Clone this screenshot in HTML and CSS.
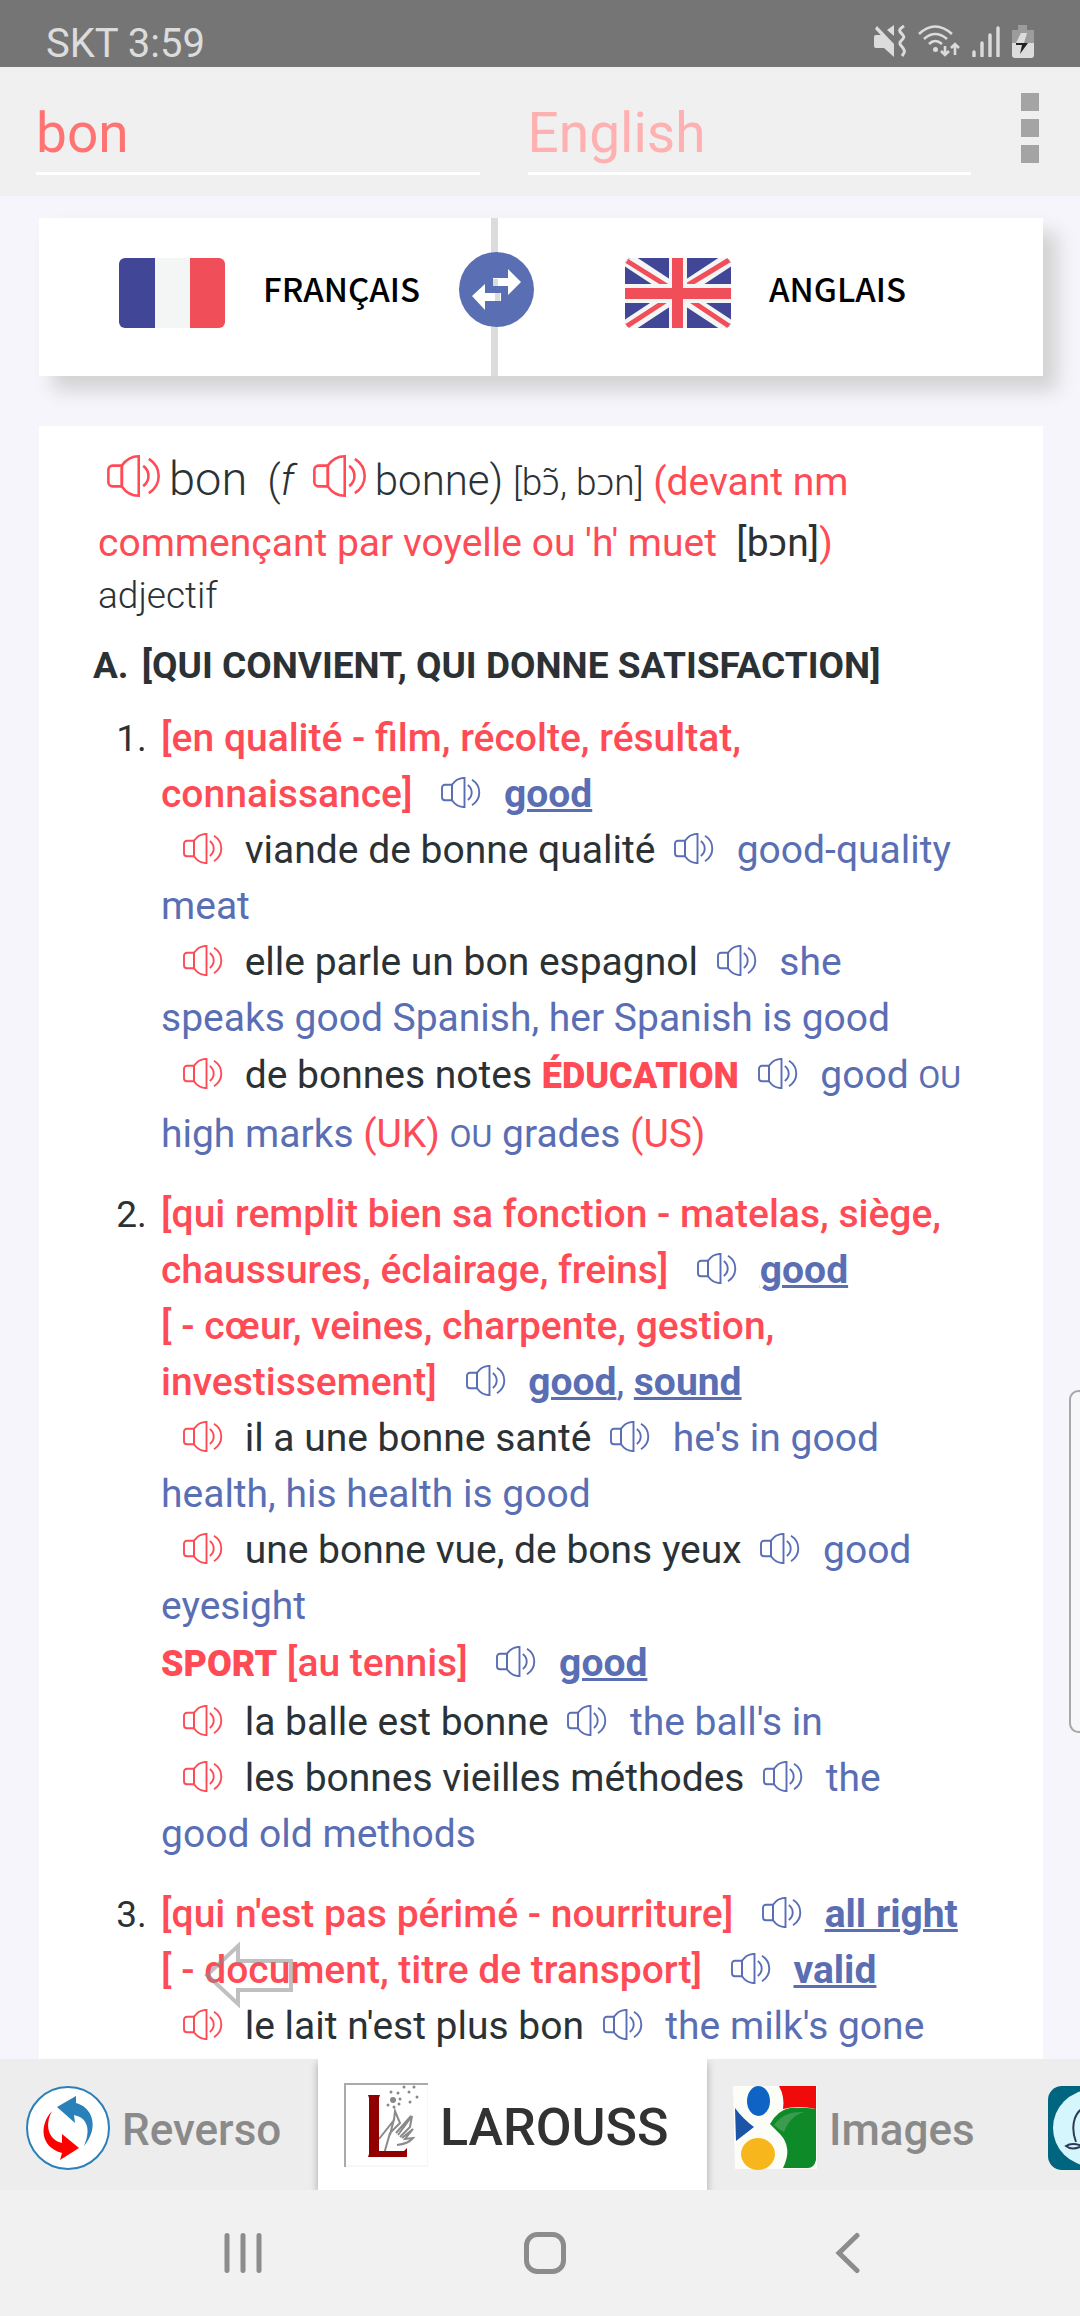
FILE: index.html
```html
<!DOCTYPE html>
<html lang="fr">
<head>
<meta charset="utf-8">
<meta name="viewport" content="width=device-width, initial-scale=1">
<title>bon – Larousse</title>
<link rel="stylesheet" href="styles.css">
</head>
<body>
<svg class="defs" aria-hidden="true">
  <symbol id="speaker" viewBox="0 0 40 31">
    <g fill="none" stroke="currentColor" stroke-width="1.9">
      <path d="M11 7.8H4a3 3 0 0 0-3 3v9.400a3 3 0 0 0 3 3h7z"/>
      <path d="M11 7.800C14 3.500 18 .9 23.500.9v29.200C18 30.100 14 27.500 11 23.200z"/>
      <path d="M26.800 8c5.200 3.800 5.200 11.200 0 15"/>
      <path d="M31 2.800c9.700 6.200 9.700 19.200 0 25.400"/>
    </g>
  </symbol>
</svg>

<header class="status">
  <span class="status-text">SKT 3:59</span>
  <div class="status-icons">
    <svg width="32" height="32" viewBox="0 0 32 32"><g fill="#dcdcdc"><path d="M2 10h6L20 22v10L10 23H2q-2 0-2-2v-9q0-2 2-2z"/><path d="M13 5l7-5v11z"/><path d="M3 1l17 18v5L1 4z"/></g><path d="M30 1c-6 4-5 5-2 8s2 4-1 7 0 4 2 7 2 4-1 8" fill="none" stroke="#dcdcdc" stroke-width="3"/></svg>
    <svg width="42" height="32" viewBox="0 0 42 32"><g fill="none" stroke="#dcdcdc" stroke-width="2.600"><path d="M1 9q16-15 33 0"/><path d="M6 14q11-10 23 0"/><path d="M11 19q6-6 13 0"/><path d="M27 21v9m-4-4l4 4 4-4M37 30V19m-4 4l4-4 4 4"/></g><circle cx="17.500" cy="24.500" r="2.500" fill="#dcdcdc"/></svg>
    <svg width="28" height="32" viewBox="0 0 28 32"><path d="M2 27v4M10 18v13M18 10v21M26 3v28" stroke="#dcdcdc" stroke-width="3.400" stroke-linecap="round"/></svg>
    <svg width="22" height="33" viewBox="0 0 22 33"><path d="M6 0h9v5h7v13H0V5h6z" fill="#9c9c9c"/><path d="M0 18h22v12q0 3-3 3H3q-3 0-3-3z" fill="#dcdcdc"/><path d="M9 8h6l-3 10H4z" fill="#dcdcdc"/><path d="M4 18h12L8 29l2-9H4z" fill="#222"/></svg>
  </div>
</header>

<form class="search">
  <input class="field" type="text" value="bon" aria-label="Mot">
  <input class="field" type="text" placeholder="English" aria-label="Langue">
  <button class="more" type="button" aria-label="Menu"><i></i><i></i><i></i></button>
</form>

<main class="page">
  <section class="langs">
    <div class="lang">
      <svg class="flag" viewBox="0 0 106 70"><path fill="#414796" d="M0 0h36v70H0z"/><path fill="#f4f6f6" d="M36 0h35v70H36z"/><path fill="#f04e59" d="M71 0h35v70H71z"/></svg>
      <span>FRANÇAIS</span>
    </div>
    <button class="swap" type="button" aria-label="Inverser"><svg viewBox="0 0 75 75" width="75" height="75"><path fill="#fff" d="M34 26h15v-9l13 13-13 13v-9H34z"/><path fill="#fff" d="M42 49H26v9L13 44l13-12v9h16z"/><path fill="#dcdcdc" d="M34 27h5v7h-5zM36 41h5v8h-5z"/></svg></button>
    <div class="lang">
      <svg class="flag" viewBox="0 0 106 70"><path fill="#414796" d="M0 0h106v70H0z"/><path stroke="#f4f6f6" stroke-width="14" d="M0 0l106 70M106 0L0 70"/><path stroke="#f04e59" stroke-width="5" d="M2 3l40 25M104 2L63 27M2 68l40-26M104 68L65 42"/><path fill="#f4f6f6" d="M44 0h18v70H44zM0 26h106v19H0z"/><path fill="#f04e59" d="M47 0h11v70H47zM0 30h106v11H0z"/></svg>
      <span>ANGLAIS</span>
    </div>
  </section>

  <article class="entry">
    <div class="head">
      <p class="line"><button class="say big" type="button" aria-label="Écouter"><svg><use href="#speaker"/></svg></button><span class="word">bon</span> <span class="form">&nbsp;(<i>f</i></span> <button class="say big" type="button" aria-label="Écouter"><svg><use href="#speaker"/></svg></button><span class="form">bonne)</span> <span class="phon">[bɔ̃, bɔn]</span> <span class="red">(devant nm commençant par voyelle ou 'h' muet&nbsp; <span class="dark">[bɔn]</span>)</span></p>
      <p class="pos">adjectif</p>
    </div>
    <h2 class="sense">A. <span>[QUI CONVIENT, QUI DONNE SATISFACTION]</span></h2>
    <ol class="list">
      <li>
        <b class="ind">[en qualité - film, récolte, résultat, connaissance]</b> <button class="say key" type="button" aria-label="Écouter"><svg><use href="#speaker"/></svg></button> <a href="#good">good</a>
        <div><button class="say fr" type="button" aria-label="Écouter"><svg><use href="#speaker"/></svg></button> viande de bonne qualité <button class="say" type="button" aria-label="Écouter"><svg><use href="#speaker"/></svg></button> <span class="en">good-quality meat</span></div>
        <div><button class="say fr" type="button" aria-label="Écouter"><svg><use href="#speaker"/></svg></button> elle parle un bon espagnol <button class="say" type="button" aria-label="Écouter"><svg><use href="#speaker"/></svg></button> <span class="en">she speaks good Spanish, her Spanish is good</span></div>
        <div><button class="say fr" type="button" aria-label="Écouter"><svg><use href="#speaker"/></svg></button> de bonnes notes <b class="domain">ÉDUCATION</b> <button class="say" type="button" aria-label="Écouter"><svg><use href="#speaker"/></svg></button> <span class="en">good <small>OU</small> high marks <span class="red">(UK)</span> <small>OU</small> grades <span class="red">(US)</span></span></div>
      </li>
      <li>
        <b class="ind">[qui remplit bien sa fonction - matelas, siège, chaussures, éclairage, freins]</b> <button class="say key" type="button" aria-label="Écouter"><svg><use href="#speaker"/></svg></button> <a href="#good">good</a>
        <div><b class="ind">[ - cœur, veines, charpente, gestion, investissement]</b> <button class="say key" type="button" aria-label="Écouter"><svg><use href="#speaker"/></svg></button> <a href="#good">good</a><span class="en">, </span><a href="#sound">sound</a></div>
        <div><button class="say fr" type="button" aria-label="Écouter"><svg><use href="#speaker"/></svg></button> il a une bonne santé <button class="say" type="button" aria-label="Écouter"><svg><use href="#speaker"/></svg></button> <span class="en">he's in good health, his health is good</span></div>
        <div><button class="say fr" type="button" aria-label="Écouter"><svg><use href="#speaker"/></svg></button> une bonne vue, de bons yeux <button class="say" type="button" aria-label="Écouter"><svg><use href="#speaker"/></svg></button> <span class="en">good eyesight</span></div>
        <div><b class="domain">SPORT</b> <b class="ind">[au tennis]</b> <button class="say key" type="button" aria-label="Écouter"><svg><use href="#speaker"/></svg></button> <a href="#good">good</a></div>
        <div><button class="say fr" type="button" aria-label="Écouter"><svg><use href="#speaker"/></svg></button> la balle est bonne <button class="say" type="button" aria-label="Écouter"><svg><use href="#speaker"/></svg></button> <span class="en">the ball's in</span></div>
        <div><button class="say fr" type="button" aria-label="Écouter"><svg><use href="#speaker"/></svg></button> les bonnes vieilles méthodes <button class="say" type="button" aria-label="Écouter"><svg><use href="#speaker"/></svg></button> <span class="en">the good old methods</span></div>
      </li>
      <li>
        <b class="ind">[qui n'est pas périmé - nourriture]</b> <button class="say key" type="button" aria-label="Écouter"><svg><use href="#speaker"/></svg></button> <a href="#all-right">all right</a>
        <div><b class="ind">[ - document, titre de transport]</b> <button class="say key" type="button" aria-label="Écouter"><svg><use href="#speaker"/></svg></button> <a href="#valid">valid</a></div>
        <div><button class="say fr" type="button" aria-label="Écouter"><svg><use href="#speaker"/></svg></button> le lait n'est plus bon <button class="say" type="button" aria-label="Écouter"><svg><use href="#speaker"/></svg></button> <span class="en">the milk's gone</span></div>
      </li>
    </ol>
  </article>
  <button class="back-arrow" type="button" aria-label="Précédent"><svg width="91" height="68" viewBox="0 0 91 68"><path d="M4 34L35 5v15h53v29H35v14z" fill="none" stroke="#8c8c8c" stroke-opacity=".55" stroke-width="4"/></svg></button>
  <div class="edge"></div>
</main>

<nav class="tabs">
  <button class="tab reverso" type="button">
    <svg width="84" height="84" viewBox="0 0 84 84"><circle cx="42" cy="42" r="41" fill="#fff" stroke="#2a80b9" stroke-width="2"/><path fill="#2a80b9" d="M31 21L50 10v7c16 4 24 24 8 43 7-16 4-28-10-31l1 8z"/><path fill="#f00" d="M26 25c-13 14-12 36 10 42l-2 7 19-12-17-14v9c-13-3-18-17-10-32z"/></svg>
    <span>Reverso</span>
  </button>
  <button class="tab active" type="button">
    <svg width="84" height="84" viewBox="0 0 84 84"><path fill="#fff" d="M0 0h84v84H0z"/><path d="M1 84V1h83" fill="none" stroke="#aaa" stroke-width="2"/><path d="M84 2v81H2" fill="none" stroke="#eee"/><g fill="none" stroke="#8a8a8a" stroke-width="2"><path d="M35 56l15-19 1-9 5 12-10 10-6 21M50 36l-4 16"/><path d="M52 50l15-17M54 52l14-19-2 11-10 10M58 55l11-9-8 10 8-1q-5 6-16 7"/></g><g fill="#888"><circle cx="49" cy="17" r="3"/><circle cx="47" cy="9" r="1.500"/><circle cx="54" cy="10" r="1.500"/><circle cx="60" cy="4" r="1.500"/><circle cx="70" cy="4" r="1.500"/><circle cx="65" cy="9" r="1.500"/><circle cx="73" cy="14" r="1.500"/><circle cx="66" cy="19" r="1.500"/><circle cx="56" cy="16" r="1.500"/><circle cx="55" cy="21" r="1.500"/><circle cx="44" cy="22" r="1.500"/><circle cx="50" cy="24" r="1.500"/></g><path fill="#900000" d="M24 12h12l-1 3v53h25l3-3v9H24l1-3V15z"/></svg>
    <span>LAROUSS</span>
  </button>
  <button class="tab images" type="button">
    <svg width="84" height="84" viewBox="0 0 84 84"><path fill="#fdfdf8" d="M0 0h84v83H2z"/><path fill="#f00a0a" d="M46 0h37v23q-18-4-33 0 2-12-4-23z"/><path fill="#0e8a28" d="M37 38q8-14 20-16 14-1 26 1v51q-2 8-8 8H50q10-20-3-34-4-4-10-10z"/><path fill="#3c9c4e" d="M41 39q10-14 30-13-14 4-20 20-5-2-10-7z"/><ellipse cx="25.500" cy="15" rx="11.500" ry="15" fill="#0f63c4"/><path fill="#1c55a8" d="M2 22q8 11 19 19Q12 48 3 55z"/><ellipse cx="25" cy="68" rx="17" ry="16" fill="#f7b71c"/></svg>
    <span>Images</span>
  </button>
  <button class="tab more-tab" type="button" aria-label="Suivant">
    <svg width="84" height="84" viewBox="0 0 84 84"><rect width="84" height="84" rx="14" fill="#006680"/><circle cx="43" cy="42" r="38" fill="#d6f6fd"/><path d="M42 20C26 22 22 40 28 56M18 60q6-4 16 0-10 5-16 0z" fill="none" stroke="#2d3a55" stroke-width="2"/></svg>
  </button>
</nav>

<footer class="nav">
  <button type="button" aria-label="Récents"><svg width="42" height="42" viewBox="0 0 42 42"><path d="M5 3.500v35M21 3.500v35M37 3.500v35" stroke="#8c8c8c" stroke-width="5" stroke-linecap="round"/></svg></button>
  <button type="button" aria-label="Accueil"><svg width="42" height="42" viewBox="0 0 42 42"><rect x="2.500" y="2.500" width="37" height="37" rx="11" fill="none" stroke="#8c8c8c" stroke-width="5"/></svg></button>
  <button type="button" aria-label="Retour"><svg width="42" height="42" viewBox="0 0 42 42"><path d="M31 3.500L13 21l18 17.500" fill="none" stroke="#8c8c8c" stroke-width="5" stroke-linecap="round"/></svg></button>
</footer>
</body>
</html>
```

FILE: styles.css
```css
* { box-sizing: border-box; }
body {
  margin: 0;
  height: 100vh;
  display: flex;
  flex-direction: column;
  background: #f5f5fb;
  color: #2b3236;
  font-family: Roboto, "Noto Sans", sans-serif;
  font-size: 39px;
  overflow: hidden;
}
button { margin: 0; padding: 0; border: 0; background: none; font: inherit; color: inherit; }
svg { display: block; }
p, h2 { margin: 0; }
.defs { position: absolute; width: 0; height: 0; }

.status {
  flex: none;
  height: 67px;
  padding: 20px 46px 0;
  display: flex;
  justify-content: space-between;
  background: #757575;
  color: #dcdcdc;
}
.status-text { font-size: 40px; line-height: 48px; }
.status-icons { display: flex; gap: 12px; padding-top: 5px; }

.search {
  flex: none;
  height: 129px;
  padding: 0 39px 0 36px;
  display: flex;
  background: #f0f0f0;
}
.field {
  flex: 1;
  min-width: 0;
  height: 108px;
  margin-right: 48px;
  padding: 26px 0 0;
  border: 0;
  border-bottom: 3px solid #fff;
  border-radius: 0;
  outline: 0;
  background: none;
  color: #ff7373;
  font: 55px Roboto, sans-serif;
}
.field::placeholder { color: #ffb0b0; opacity: 1; }
.more { width: 22px; display: flex; flex-direction: column; align-items: center; gap: 8px; padding-top: 26px; }
.more i { width: 18px; height: 18px; background: #a4a4a4; }

.page { flex: 1; min-height: 0; position: relative; padding: 22px 37px 0 39px; overflow: hidden; }
.langs {
  height: 158px;
  display: grid;
  grid-template-columns: 1fr 1fr;
  position: relative;
  background: #fff;
  box-shadow: 14px 14px 18px #d2d2d2;
  color: #000;
  font: 500 33px "Noto Sans CJK SC", sans-serif;
}
.lang { display: flex; align-items: center; gap: 38px; padding: 0 0 8px 80px; }
.lang span { padding-bottom: 10px; }
.lang:first-child { border-right: 7px solid #dcdcdc; margin-right: 43px; }
.lang + .swap + .lang { padding-left: 84px; }
.flag { width: 106px; height: 70px; border-radius: 6px; }
.swap { position: absolute; left: 420px; top: 34px; width: 75px; height: 75px; border-radius: 50%; background: #5a6eb4; }

.entry { margin-top: 50px; padding: 23px 76px 0 59px; background: #fff; min-height: 100%; }
.line { line-height: 60px; }
.word { font-size: 47px; font-weight: 300; }
.form { font-size: 42px; font-weight: 300; }
.phon { font-size: 37px; font-weight: 300; }
.pos { font-weight: 300; font-size: 37px; line-height: 46px; }
.red { color: #ff4b55; }
.dark { color: #2b3236; }
.say { color: #5a6eb4; margin: 0 13px 0 9px; width: 40px; height: 31px; vertical-align: -1px; }
.say svg { width: 100%; height: 100%; }
.say.fr { color: #ff4b55; margin-left: 22px; margin-right: 12px; }
.say.key { margin-left: 19px; margin-right: 13px; }
.say.big { width: 54px; height: 42px; color: #ff4b55; margin: 0 8px 0 9px; vertical-align: -2px; }

.sense { font-size: 37px; font-weight: 700; line-height: 48px; margin: 23px 0 0 -5px; }
.sense span { margin-left: 4px; }
.list { margin: 20px 0 0; padding: 0 0 0 58px; line-height: 56px; }
.list li { margin-bottom: 24px; padding-left: 5px; }
.list li::marker { font-size: 37px; }
.ind { font-weight: 500; color: #ff4b55; }
.domain { font-size: 36px; line-height: 60px; font-weight: 900; color: #ff4b55; }
.en { color: #5a6eb4; }
small { font-size: 32px; line-height: 48px; }
a { color: #5a6eb4; font-weight: 700; text-decoration: underline; text-decoration-thickness: 3px; }

.back-arrow { position: absolute; left: 203px; bottom: 50px; }
.edge { position: absolute; right: -8px; top: 1194px; width: 19px; height: 343px; border: 2px solid #a8a8a8; border-radius: 12px; background: #f7f7f9; }

.tabs { flex: none; height: 131px; display: flex; background: #ededed; color: #8a8a8a; overflow: hidden; font-weight: 500; font-size: 44px; }
.tab { flex: none; display: flex; align-items: center; gap: 12px; padding: 6px 26px 0; white-space: nowrap; }
.tab span { padding-top: 5px; }
.tab.reverso { width: 318px; }
.tab.active { width: 389px; background: #fff; color: #323232; font-size: 52px; padding-top: 0; box-shadow: 0 4px 8px rgba(0, 0, 0, .3); }
.tab.images { width: 315px; }

.nav { flex: none; height: 126px; padding: 0 82px 0 92px; display: flex; background: #f1f1f1; }
.nav button { flex: 1; display: flex; align-items: center; justify-content: center; }
```
